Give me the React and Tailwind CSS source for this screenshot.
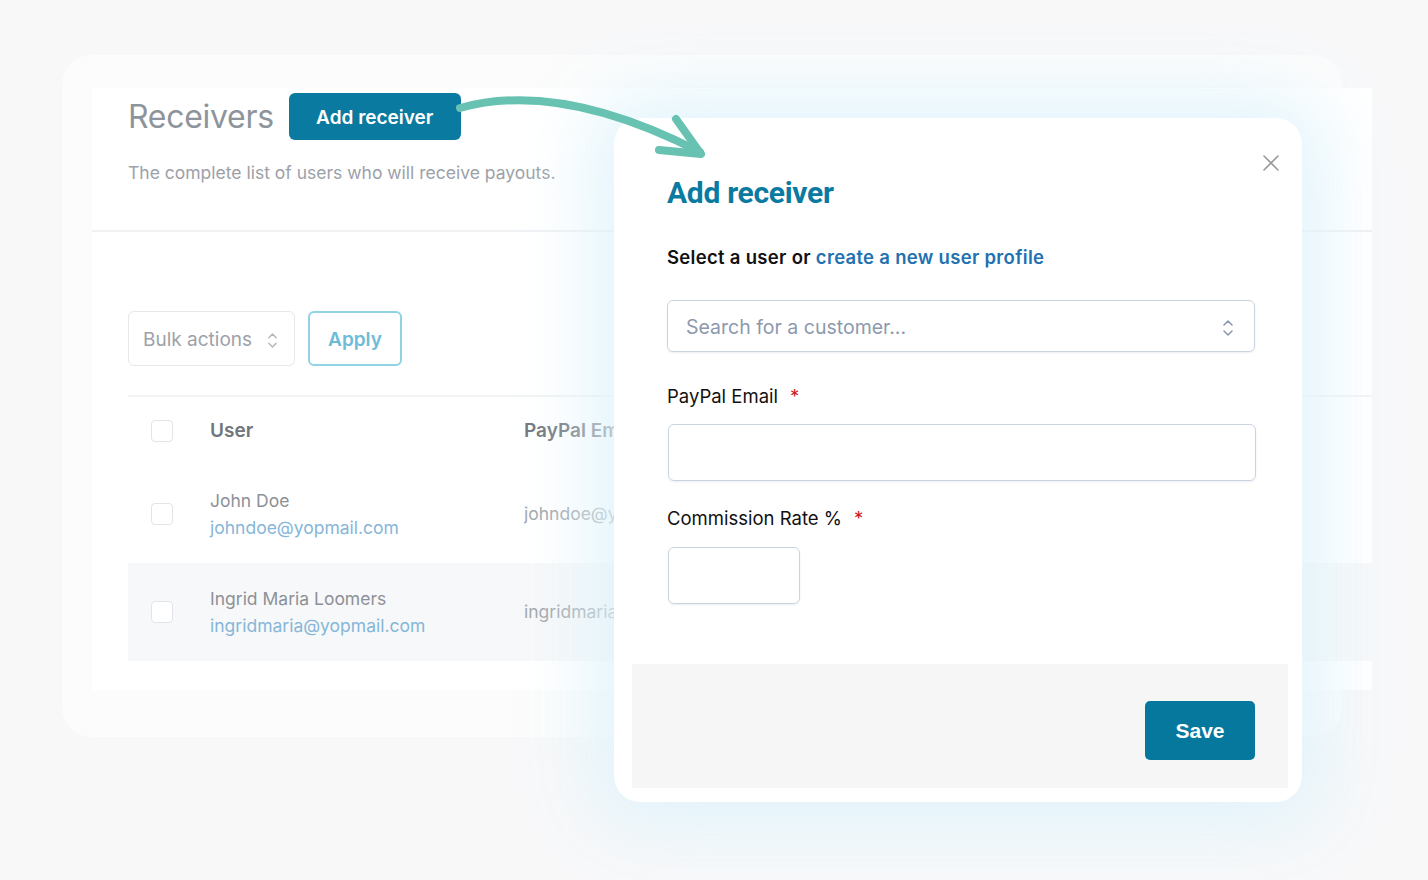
import React from 'react';

function UpDown({ className }) {
  return (
    <svg viewBox="0 0 12 20" className={className} fill="none" stroke="currentColor" strokeWidth="1.6" strokeLinecap="round" strokeLinejoin="round">
      <path d="M2 7l4-4 4 4" />
      <path d="M2 13l4 4 4-4" />
    </svg>
  );
}

function Box() {
  return <div className="w-[22px] h-[22px] rounded-[4px] border-[1.5px] border-[#e1e4e8] bg-white" />;
}

function Row({ name, email, paypal, shaded }) {
  return (
    <div className={`flex items-center h-[98px] ${shaded ? 'bg-[#f7f8f9]' : ''}`}>
      <div className="w-[82px] pl-[23px]"><Box /></div>
      <div className="w-[314px] flex flex-col gap-[4px] text-[17.5px] leading-[23px]">
        <span className="text-[#8d9197]">{name}</span>
        <span className="text-[#86b6d8]">{email}</span>
      </div>
      {/* column is cut where the modal starts */}
      <span className="w-[90px] overflow-hidden whitespace-nowrap text-[17.5px] text-[#a2a6ab]">{paypal}</span>
    </div>
  );
}

function Background() {
  return (
    <div className="ml-[62px] mt-[55px] w-[1280px] h-[682px] rounded-[30px] bg-[#fcfcfc] pt-[33px] pl-[30px]">
      <div className="w-[1280px] h-[602px] bg-white">
        <div className="border-b-2 border-[#eff1f3] h-[144px] px-[36px] pt-[5px]">
          <div className="flex items-center gap-[15px]">
            <h1 className="text-[32px] leading-[47px] text-[#8e949c] tracking-[-0.3px]">Receivers</h1>
            <button className="h-[47px] w-[172px] pt-[3px] rounded-[6px] bg-[#0b7aa0] text-white text-[19px] font-semibold">Add receiver</button>
          </div>
          <p className="mt-[20px] text-[17.5px] text-[#9ca1a8]">The complete list of users who will receive payouts.</p>
        </div>
        <div className="pl-[36px] pt-[79px]">
          <div className="flex gap-[13px]">
            <div className="w-[167px] h-[55px] rounded-[6px] border-[1.5px] border-[#e6e8eb] flex items-center justify-between pl-[14px] pr-[16px] pt-[3px]">
              <span className="text-[19px] text-[#9da2a8]">Bulk actions</span>
              <UpDown className="w-[11px] h-[19px] text-[#b3b7bc]" />
            </div>
            <button className="w-[94px] h-[55px] pt-[3px] rounded-[6px] border-2 border-[#92d2e5] text-[#6dbcd7] text-[19px] font-semibold">Apply</button>
          </div>
          <div className="mt-[29px] w-[1244px] border-t-2 border-[#f2f3f4]">
            <div className="flex items-center h-[68px]">
              <div className="w-[82px] pl-[23px]"><Box /></div>
              <span className="w-[314px] text-[19px] font-semibold text-[#71767c]">User</span>
              <span className="w-[90px] overflow-hidden whitespace-nowrap text-[19px] font-semibold text-[#71767c]">PayPal Email</span>
            </div>
            <Row name="John Doe" email="johndoe@yopmail.com" paypal="johndoe@yopmail.com" />
            <Row name="Ingrid Maria Loomers" email="ingridmaria@yopmail.com" paypal="ingridmaria@yopmail.com" shaded />
          </div>
        </div>
      </div>
    </div>
  );
}

function Modal() {
  return (
    <div className="absolute left-[614px] top-[118px] w-[688px] h-[684px] rounded-[26px] bg-white flex flex-col font-['Inter',sans-serif]">
      <button className="absolute right-[22px] top-[36px] text-[#9a9a9a]">
        <svg viewBox="0 0 18 18" className="w-[18px] h-[18px]" fill="none" stroke="currentColor" strokeWidth="1.6" strokeLinecap="round">
          <path d="M2 2l14 14M16 2L2 16" />
        </svg>
      </button>
      <div className="pl-[53px] pr-[46px] pt-[57px]">
        <h2 className="text-[30px] leading-[36px] font-bold text-[#0b7aa1] tracking-[-0.3px] font-['Roboto',sans-serif]">Add receiver</h2>
        <p className="mt-[34px] text-[18.5px] leading-[24px] font-semibold text-[#111] tracking-[0.3px]">
          Select a user or <span className="text-[#2271b1]">create a new user profile</span>
        </p>
        <div className="mt-[31px] w-[588px] h-[52px] rounded-[6px] border-[1.5px] border-[#cad4e1] shadow-[0_1px_2px_rgba(120,140,170,0.15)] flex items-center justify-between pl-[18px] pr-[20px] pt-[3px]">
          <span className="text-[19.5px] text-[#8c99ad]">Search for a customer...</span>
          <UpDown className="w-[12px] h-[22px] text-[#8c99ad]" />
        </div>
        <div className="mt-[32px] flex items-center gap-[12px] text-[18.5px] leading-[24px] text-[#111]">
          <span>PayPal Email</span>
          <span className="text-[#cc1818]">*</span>
        </div>
        <div className="mt-[16px] ml-[1px] w-[588px] h-[57px] rounded-[6px] border-[1.5px] border-[#cad4e1] shadow-[0_1px_2px_rgba(120,140,170,0.15)]" />
        <div className="mt-[25px] flex items-center gap-[12px] text-[18.5px] leading-[24px] text-[#111]">
          <span>Commission Rate %</span>
          <span className="text-[#cc1818]">*</span>
        </div>
        <div className="mt-[17px] ml-[1px] w-[132px] h-[57px] rounded-[6px] border-[1.5px] border-[#cad4e1] shadow-[0_1px_2px_rgba(120,140,170,0.15)]" />
      </div>
      <div className="mt-auto mb-[14px] ml-[18px] mr-[14px] h-[124px] bg-[#f6f6f6] flex justify-end items-start pt-[37px] pr-[33px]">
        <button className="w-[110px] h-[59px] rounded-[5px] bg-[#06789e] text-white text-[21px] font-bold font-['Liberation_Sans',sans-serif]">Save</button>
      </div>
    </div>
  );
}

export default function App() {
  return (
    <div className="relative w-[1428px] h-[880px] overflow-hidden bg-[#f8f8f9] font-['Inter',sans-serif]">
      <Background />
      <div className="absolute left-[590px] top-[95px] w-[735px] h-[735px] rounded-[50px] bg-[#dff3fb] blur-[36px] opacity-90" />
      <Modal />
      <svg className="absolute left-0 top-0 w-[1428px] h-[880px] pointer-events-none" viewBox="0 0 1428 880" fill="none">
        <path d="M460 108 Q560 80 700 152" stroke="#67c2b1" strokeWidth="8" strokeLinecap="round" />
        <path d="M676 119 L701 154 L659 150" stroke="#67c2b1" strokeWidth="8" strokeLinecap="round" strokeLinejoin="round" />
      </svg>
    </div>
  );
}
